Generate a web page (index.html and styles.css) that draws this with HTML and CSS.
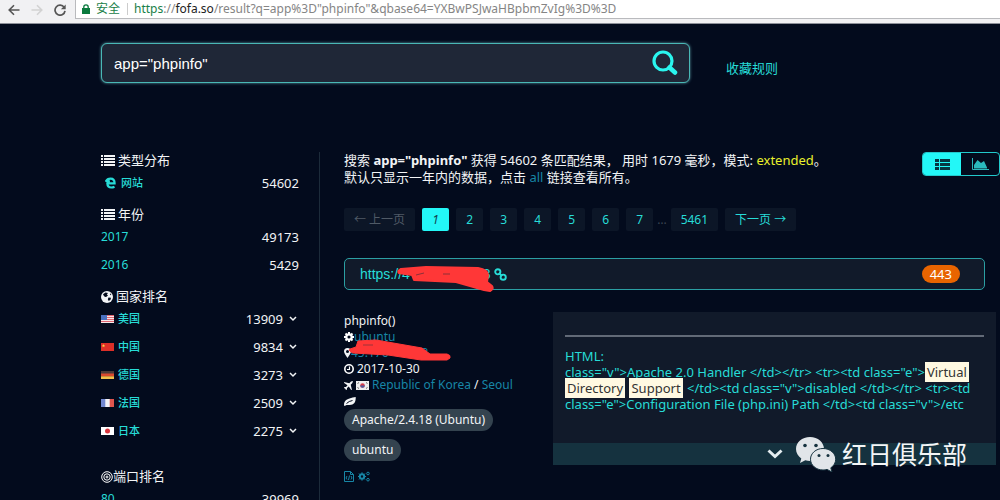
FILE: index.html
```html
<!DOCTYPE html>
<html lang="zh-CN">
<head>
<meta charset="utf-8">
<meta name="viewport" content="width=device-width, initial-scale=1">
<title>app="phpinfo"</title>
<link rel="stylesheet" href="styles.css">
</head>
<body>
<svg class="sprite" aria-hidden="true">
  <symbol id="list" viewBox="0 0 14 11"><path d="M0 0h2v2H0zM3 0h11v2H3zM0 3h2v2H0zM3 3h11v2H3zM0 6h2v2H0zM3 6h11v2H3zM0 9h2v2H0zM3 9h11v2H3z"/></symbol>
  <symbol id="chev" viewBox="0 0 8 6"><path d="M1 1l3 3 3-3" fill="none" stroke="currentColor" stroke-width="1.5"/></symbol>
</svg>

<header class="browser">
  <nav class="browser-nav">
    <button type="button" aria-label="后退"><svg width="12" height="12" viewBox="0 0 12 12"><path d="M11.5 6H1.2M6 1.2L1.2 6 6 10.8" fill="none" stroke="#555" stroke-width="1.6"/></svg></button>
    <button type="button" aria-label="前进"><svg width="12" height="12" viewBox="0 0 12 12"><path d="M.5 6h10.3M6 1.2L10.8 6 6 10.8" fill="none" stroke="#d2d2d2" stroke-width="1.6"/></svg></button>
    <button type="button" aria-label="刷新"><svg width="12" height="12" viewBox="0 0 12 12"><path d="M10.2 3.4A5 5 0 1 0 11 6.8" fill="none" stroke="#555" stroke-width="1.7"/><path d="M11.7.4v4.8H6.9z" fill="#555"/></svg></button>
  </nav>
  <div class="omnibox">
    <svg width="8" height="10" viewBox="0 0 8 10"><path d="M0 4h8v6H0z" fill="#0b7a3e"/><path d="M1.8 4.5V3a2.2 2.2 0 0 1 4.4 0v1.500" fill="none" stroke="#0b7a3e" stroke-width="1.300"/></svg>
    <span class="secure">安全</span>
    <span class="url"><span class="scheme">https</span>://<span class="host">fofa.so</span>/result?q=app%3D"phpinfo"&amp;qbase64=YXBwPSJwaHBpbmZvIg%3D%3D</span>
  </div>
</header>

<div class="page">
  <div class="top">
    <form class="search" role="search">
      <input type="text" aria-label="搜索" value='app="phpinfo"'>
      <button type="submit" aria-label="搜索"><svg width="26" height="26" viewBox="0 0 26 26"><circle cx="11" cy="11" r="9" fill="none" stroke="currentColor" stroke-width="3.200"/><path d="M17.500 17.500l5.500 5" stroke="currentColor" stroke-width="4.500" stroke-linecap="round"/></svg></button>
    </form>
    <a class="rules" href="#">收藏规则</a>
  </div>

  <div class="columns">
    <aside class="side">
      <section>
        <h2><svg width="14" height="11"><use href="#list"/></svg>类型分布</h2>
        <ul>
          <li><a class="site" href="#"><svg width="11" height="12" viewBox="0 0 11 12"><path d="M2.300 6.300H9.600C9.600 3.400 8.200 1.600 5.600 1.600 3.300 1.600 1.500 2.800.8 4.800M2.300 6.300C2.400 9 4 10.500 6.300 10.500c1.200 0 2.200-.3 3.200-.8M2.300 6.500C2.400 5 3.400 4.200 4.800 3.900" fill="none" stroke="currentColor" stroke-width="2.200"/></svg>网站</a><span>54602</span></li>
        </ul>
      </section>
      <section>
        <h2><svg width="14" height="11"><use href="#list"/></svg>年份</h2>
        <ul>
          <li><a class="num" href="#">2017</a><span>49173</span></li>
          <li><a class="num" href="#">2016</a><span>5429</span></li>
        </ul>
      </section>
      <section>
        <h2><svg width="12" height="12" viewBox="0 0 12 12"><circle cx="6" cy="6" r="6"/><path d="M2 3.200l2.500-1.700L7 2 5.800 3.400 7 4.200 5.600 5.800 4 6 2.600 4.600zM7.500 6.500l2.500.3-.5 2-1.800 1.200-.9-1.800zM9 2.300l1.400 1.500-1.200.4z" fill="#030b1d"/></svg>国家排名</h2>
        <ul>
          <li><a href="#"><svg class="flag" width="13" height="8" viewBox="0 0 13 8"><path d="M0 0h13v8H0z" fill="#f6e9ea"/><path d="M0 .5h13M0 2.500h13M0 4.500h13M0 6.500h13" stroke="#df6470"/><path d="M0 0h6v5H0z" fill="#4a70c0"/></svg>美国</a><span>13909</span><button type="button" aria-label="展开美国"><svg width="8" height="6"><use href="#chev"/></svg></button></li>
          <li><a href="#"><svg class="flag" width="13" height="8" viewBox="0 0 13 8"><path d="M0 0h13v8H0z" fill="#dc2f28"/><path d="M2.500 1l.5 1.200h1.200l-1 .8.4 1.200-1.100-.7-1.100.7.4-1.200-1-.8h1.200z" fill="#fbd34a"/></svg>中国</a><span>9834</span><button type="button" aria-label="展开中国"><svg width="8" height="6"><use href="#chev"/></svg></button></li>
          <li><a href="#"><svg class="flag" width="13" height="8" viewBox="0 0 13 8"><path d="M0 0h13v3H0z" fill="#4b3a38"/><path d="M0 2.500h13v3H0z" fill="#d94a2e"/><path d="M0 5.300h13V8H0z" fill="#f2c04b"/></svg>德国</a><span>3273</span><button type="button" aria-label="展开德国"><svg width="8" height="6"><use href="#chev"/></svg></button></li>
          <li><a href="#"><svg class="flag" width="13" height="8" viewBox="0 0 13 8"><path d="M0 0h13v8H0z" fill="#f3f3f6"/><path d="M0 0h4.300v8H0z" fill="#7288d0"/><path d="M8.700 0H13v8H8.700z" fill="#e0554e"/></svg>法国</a><span>2509</span><button type="button" aria-label="展开法国"><svg width="8" height="6"><use href="#chev"/></svg></button></li>
          <li><a href="#"><svg class="flag" width="13" height="8" viewBox="0 0 13 8"><path d="M0 0h13v8H0z" fill="#fff"/><circle cx="6.500" cy="4" r="2.500" fill="#d8343c"/></svg>日本</a><span>2275</span><button type="button" aria-label="展开日本"><svg width="8" height="6"><use href="#chev"/></svg></button></li>
        </ul>
      </section>
      <section class="ports">
        <h2><svg width="12" height="12" viewBox="0 0 12 12" fill="none" stroke="#fff"><circle cx="6" cy="6" r="5.300"/><circle cx="6" cy="6" r="3.200"/><circle cx="6" cy="6" r="1"/></svg>端口排名</h2>
        <ul>
          <li><a class="num" href="#">80</a><span>39969</span></li>
        </ul>
      </section>
    </aside>

    <main class="main">
      <div class="summary">
        <p>搜索 <b>app="phpinfo"</b> 获得 54602 条匹配结果， 用时 1679 毫秒，模式: <span class="mode">extended</span>。<br>默认只显示一年内的数据，点击 <a href="#">all</a> 链接查看所有。</p>
        <div class="views">
          <button class="on" type="button" aria-label="列表"><svg width="15" height="11" viewBox="0 0 15 11"><path d="M0 0h4v3H0zM5 0h10v3H5zM0 4h4v3H0zM5 4h10v3H5zM0 8h4v3H0zM5 8h10v3H5z"/></svg></button>
          <button type="button" aria-label="统计"><svg width="17" height="12" viewBox="0 0 17 12"><path d="M.5 0v11.500H17" fill="none" stroke="currentColor"/><path d="M2 10.500V7l3.500-5L9 5l3-2 3 6.500v1z"/></svg></button>
        </div>
      </div>

      <nav class="pages">
        <span class="off">← 上一页</span>
        <em class="current">1</em>
        <a href="#">2</a><a href="#">3</a><a href="#">4</a><a href="#">5</a><a href="#">6</a><a href="#">7</a>
        <span class="gap">…</span>
        <a href="#">5461</a><a href="#">下一页 →</a>
      </nav>

      <article>
        <div class="result-head">
          <div class="masked">
            <a class="address" href="#">https://4<span class="hidden-part"></span>3<svg width="13" height="13" viewBox="0 0 13 13" fill="none" stroke="currentColor" stroke-width="1.900"><circle cx="3.800" cy="3.800" r="2.600"/><circle cx="9.200" cy="9.200" r="2.600"/><path d="M4.800 4.800l3.400 3.400"/></svg></a>
            <svg class="scribble" width="98" height="30" viewBox="0 0 98 30"><path d="M5 5L30 3l52 1q10 2 10 7l-1 7 5 4q2 3-2 5l-6-1L60 18l-42-2-2-5L3 9Q1 7 5 5z" fill="#ff3737" stroke="#ff3737" stroke-width="2" stroke-linejoin="round"/><path d="M20 11l8-2M47 10h7" stroke="#8d3037"/></svg>
          </div>
          <a class="port" href="#">443</a>
        </div>

        <div class="detail">
          <div class="meta">
            <div>phpinfo()</div>
            <div><svg width="10" height="10" viewBox="0 0 10 10"><path d="M5 0v10M0 5h10M1.500 1.500l7 7M8.500 1.500l-7 7" stroke="#fff" stroke-width="2"/><circle cx="5" cy="5" r="2.700" fill="#030b1d" stroke="#fff" stroke-width="2.200"/></svg><a href="#">ubuntu</a></div>
            <div class="masked"><svg width="7" height="10" viewBox="0 0 7 10"><path fill-rule="evenodd" d="M3.500 0A3.500 3.500 0 0 1 7 3.500C7 5 5 7.500 3.500 10 2 7.500 0 5 0 3.500A3.500 3.500 0 0 1 3.500 0zm0 2a1.500 1.500 0 1 0 0 3 1.500 1.500 0 0 0 0-3z"/></svg><a class="ip" href="#">45.176<span class="hidden-part"></span>3</a>
              <svg class="scribble low" width="104" height="24" viewBox="0 0 104 24"><path d="M10 2l18-1 46 8 8 6h17q4 1 3 4l-3 2H73L40 16 5 14Q0 12 2 10l6-2z" fill="#ff3737" stroke="#ff3737" stroke-width="1" stroke-linejoin="round"/><path d="M15 6h10" stroke="#9c343b"/></svg>
            </div>
            <div><svg class="spaced" width="10" height="10" viewBox="0 0 10 10" fill="none" stroke="#fff"><circle cx="5" cy="5" r="4.200" stroke-width="1.600"/><path d="M5.500 2.500v3H3" stroke-width="1.200"/></svg>2017-10-30</div>
            <div><svg class="spaced" width="9" height="9" viewBox="0 0 9 9"><path d="M9 0L8.400 2 6.700 3.700 8 9 7 8.800 4.800 5.500 3 7v1.600L2 9 1.300 7.700 0 7l.4-1L2 6l1.500-1.800L.2 2 0 1l5.300 1.300L7 .6z"/></svg><svg class="spaced" width="13" height="9" viewBox="0 0 13 9"><path d="M0 0h13v9H0z" fill="#eee"/><circle cx="6.500" cy="4.500" r="2.300" fill="#d53a48"/><path d="M4.200 4.500a2.300 2.300 0 0 0 4.600 0z" fill="#475c9f"/><path d="M1.500 2.500l1.500-1M1.500 6.500l1.500 1M10 1.500l1.500 1M10 7.500l1.500-1" stroke="#666"/></svg><a href="#">Republic of Korea</a> / <a href="#">Seoul</a></div>
            <div><svg width="12" height="9" viewBox="0 0 12 9"><path d="M0 8.500C0 3 3 1.500 11.700 0 12 5 10 8 5.500 8 3.500 8 2 7.500 1 9z"/><path d="M2.500 6.500Q5 4 8.500 3.500" fill="none" stroke="#030b1d"/></svg></div>
            <div class="tags"><a href="#">Apache/2.4.18 (Ubuntu)</a><a href="#">ubuntu</a></div>
            <div class="tools">
              <svg width="10" height="11" viewBox="0 0 10 11" fill="none" stroke="currentColor"><path d="M.5.500h6l3 3v7h-9zM6.500.500v3h3M3 5L2 7l1 1.500M7 5l1 2-1 1.500M5.500 4.500l-1 4.500"/></svg>
              <svg width="12" height="11" viewBox="0 0 12 11" fill="none" stroke="currentColor"><circle cx="4" cy="5.500" r="2.200" stroke-width="2"/><path d="M4 1.300v1.700M4 8v1.700M-.1 5.500h1.500M6.600 5.500h1.500M1 2.500l1 1M6 7.500l1 1M7 2.500l-1 1M1 8.500l1-1"/><circle cx="10" cy="2.500" r="1.300"/><circle cx="10" cy="8.700" r="1.300"/></svg>
            </div>
          </div>
          <div class="banner">
            <div class="code">
              <hr>
              <p>HTML:<br>class="v"&gt;Apache 2.0 Handler &lt;/td&gt;&lt;/tr&gt; &lt;tr&gt;&lt;td class="e"&gt;<mark>Virtual</mark> <mark>Directory</mark> <mark>Support</mark> &lt;/td&gt;&lt;td class="v"&gt;disabled &lt;/td&gt;&lt;/tr&gt; &lt;tr&gt;&lt;td class="e"&gt;Configuration File (php.ini) Path &lt;/td&gt;&lt;td class="v"&gt;/etc</p>
            </div>
            <button class="more" type="button" aria-label="展开"><svg width="16" height="10" viewBox="0 0 16 10"><path d="M1.500 1.500L8 7.500l6.500-6" fill="none" stroke="#e4edf0" stroke-width="3"/></svg></button>
          </div>
        </div>
      </article>
    </main>
  </div>
</div>

<div class="watermark">
  <svg width="40" height="35" viewBox="0 0 40 35"><path d="M14 0C6 0 0 5.300 0 12c0 4 2 7.200 5.300 9.400L4 26l5.300-2.800c1.600.5 3.200.7 4.700.7C22 24 28 18.500 28 12S22 0 14 0z" fill="#e1e5e9"/><path d="M27 11.500c-7 0-12.500 4.800-12.500 10.700S20 33 27 33c1.400 0 2.800-.2 4-.6l5 2.600-1.200-4.200c3-2 4.900-5 4.900-8.600 0-5.900-5.700-10.700-12.700-10.700z" fill="#e1e5e9" stroke="#16323f" stroke-width="1"/><g fill="#16323f"><circle cx="9" cy="8.500" r="1.800"/><circle cx="20" cy="8.500" r="1.800"/><circle cx="23" cy="18.500" r="1.500"/><circle cx="32" cy="18.500" r="1.500"/></g></svg>
  <span>红日俱乐部</span>
</div>
</body>
</html>
```
FILE: styles.css
```css
* { box-sizing: border-box; }

body {
  margin: 0;
  height: 100vh;
  overflow: hidden;
  background: #030b1d;
  color: #f2f4f6;
  fill: currentColor;
  font: 12px/16px "Noto Sans", "Noto Sans CJK SC", sans-serif;
}

a { color: #27dcd7; text-decoration: none; }
button { padding: 0; border: 0; background: none; font: inherit; color: inherit; }
p, h2, ul { margin: 0; padding: 0; }
svg { flex: none; }
.sprite { position: absolute; width: 0; height: 0; }

/* Browser bar */
.browser {
  display: flex;
  height: 24px;
  padding-bottom: 4px;
  background: #f1f1f3;
  border-bottom: 1px solid #8d9099;
}
.browser-nav { display: flex; align-items: center; gap: 11px; padding: 0 9px 0 8px; }
.browser-nav button { display: flex; }
.omnibox {
  display: flex;
  flex: 1;
  align-items: center;
  min-width: 0;
  padding-left: 6px;
  background: #fff;
  border: 1px solid #b9babd;
  border-width: 0 0 1px 1px;
  white-space: nowrap;
}
.secure {
  margin: 0 6px 0 6px;
  padding-right: 7px;
  border-right: 1px solid #ccc;
  color: #188048;
  line-height: 12px;
}
.url { color: #858585; }
.scheme { color: #188048; }
.host { color: #222; }

/* Search row */
.page { padding-left: 101px; }
.top { display: flex; align-items: center; gap: 36px; padding: 19px 0; }
.search {
  display: flex;
  align-items: center;
  width: 589px;
  height: 40px;
  padding: 0 11px 0 12px;
  background: #1f2737;
  border: 1px solid #49b8b6;
  border-radius: 6px;
  box-shadow: 0 0 3px #5b9ba4;
}
.search input {
  flex: 1;
  min-width: 0;
  padding: 0;
  border: 0;
  outline: 0;
  background: none;
  color: #fff;
  font: 15px "Liberation Sans", "Noto Sans CJK SC", sans-serif;
}
.search button { display: flex; color: #2af5ee; }
.rules { padding-top: 10px; font-size: 13px; }

.columns { display: flex; gap: 24px; padding-top: 50px; }

/* Facets */
.side { flex: none; width: 219px; padding-right: 20px; border-right: 1px solid #1c2b3a; }
.side section { margin-bottom: 9px; }
.side .ports { margin-top: 23px; }
.side h2 { display: flex; align-items: center; gap: 3px; font-size: 13px; font-weight: 400; line-height: 17px; }
.side .ports h2 { gap: 0; }
.side ul { list-style: none; }
.side li { display: flex; align-items: center; height: 28px; font-size: 13px; }
.side a { display: flex; align-items: center; gap: 4px; margin-right: auto; font-size: 11px; font-weight: 500; }
.side .num { font-size: 12px; font-weight: 400; }
.side .site { padding-left: 4px; gap: 5px; }
.side button { display: flex; padding: 0 2px 0 6px; }

/* Results */
.main { flex: 1; min-width: 0; }
.summary { display: flex; justify-content: space-between; align-items: flex-start; font-size: 13px; line-height: 17px; }
.summary p a, .meta a { color: #1786a6; }
.summary .mode { color: #eaf22c; }
.views {
  display: flex;
  flex: none;
  height: 24px;
  border: 1px solid #22c9cc;
  border-radius: 4px;
  overflow: hidden;
}
.views button { display: flex; align-items: center; justify-content: center; width: 38px; color: #2ab9bd; }
.views .on { background: #23f7f7; color: #063642; }

.pages { display: flex; gap: 7px; margin-top: 22px; line-height: 23px; }
.pages > * { min-width: 27px; padding: 0 10px; border-radius: 2px; background: #0c1627; text-align: center; }
.pages .off { color: #505a66; }
.pages .current { background: #23f7f7; color: #124552; }
.pages .gap { min-width: 0; margin: 0 -3px; padding: 0; background: none; color: #3b4552; }

.result-head {
  display: flex;
  align-items: center;
  justify-content: space-between;
  height: 32px;
  margin: 27px 15px 22px 0;
  padding: 0 24px 0 15px;
  background: #111a2a;
  border: 1px solid #2b9fa3;
  border-radius: 5px;
}
.masked { position: relative; }
.address { display: flex; align-items: center; font: 14px/20px "Liberation Sans", sans-serif; }
.address svg { margin-left: 3px; }
.hidden-part { display: inline-block; width: 73px; }
.scribble { position: absolute; left: 36px; top: 0; }
.port { padding: 0 8px; border-radius: 9px; background: #e86400; color: #fff; font-size: 13px; line-height: 18px; }

.detail { display: flex; align-items: flex-start; justify-content: space-between; padding-right: 4px; }
.meta { width: 200px; padding-top: 1px; }
.meta > div { display: flex; align-items: center; min-height: 16px; white-space: pre; }
.meta .spaced { margin-right: 3px; }
.meta .hidden-part { width: 33px; }
.meta .low { left: 4px; top: -6px; }
.meta .tags { flex-direction: column; align-items: flex-start; gap: 8px; }
.tags a { padding: 0 8px; border-radius: 11px; background: #34434f; color: #f2f4f6; line-height: 22px; }
.meta .tools { gap: 4px; padding-top: 10px; color: #1786a6; }

.banner { display: flex; flex-direction: column; width: 443px; background: #111a2a; }
.code { padding: 23px 12px 31px; color: #27dcd7; font-size: 13px; }
.code hr { height: 2px; margin: 0 0 11px; border: 0; background: #626a77; }
mark { margin-right: 1px; padding: 1px 2px; background: #fff9e2; color: #333; }
.more { display: flex; align-items: center; justify-content: center; height: 22px; background: #15323f; }

.watermark {
  position: absolute;
  right: 33px;
  bottom: 28px;
  display: flex;
  align-items: center;
  gap: 6px;
  color: #f4f6f7;
  font-size: 25px;
  line-height: 35px;
}
```
